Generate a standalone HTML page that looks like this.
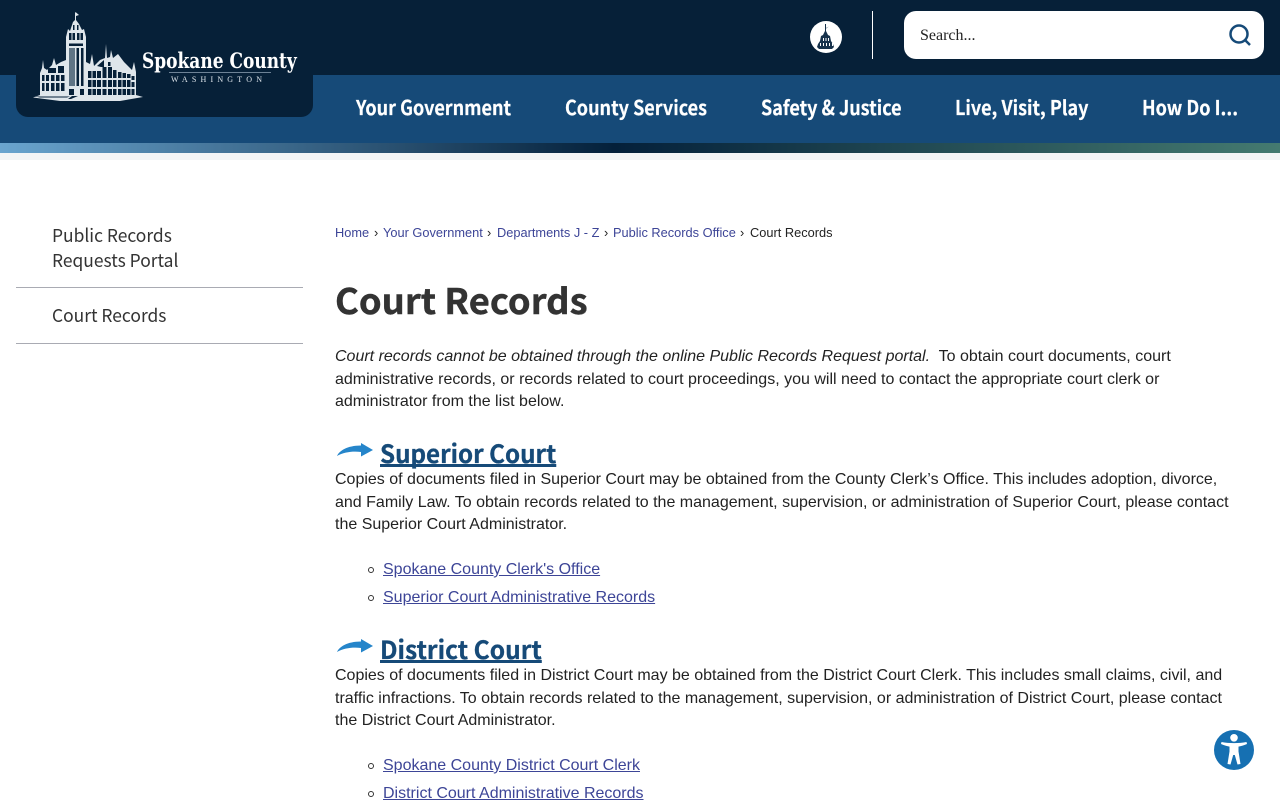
<!DOCTYPE html>
<html lang="en"><head><meta charset="utf-8"><title>Court Records</title>
<style>
*{box-sizing:border-box}
html,body{margin:0;padding:0;width:1280px;height:800px;overflow:hidden;background:#fff}
body{position:relative;font-family:"Liberation Sans",Arial,sans-serif;color:#222}
.a{position:absolute;white-space:nowrap}
a{color:#3d4597}
.nav{top:94px;font:700 20px/25px "Noto Sans CJK JP","Liberation Sans",sans-serif;color:#fff;transform-origin:0 50%;transform:scaleX(.9);-webkit-text-stroke:.2px #fff}
.side{left:52px;font:400 18px/25px "Noto Sans CJK JP","Liberation Sans",sans-serif;color:#333;transform-origin:0 50%;transform:scaleX(.967)}
.t{left:335px;font-size:16px;line-height:22px;color:#222}
.bc{top:225px;font-size:12.8px;line-height:15px}
.bc a{text-decoration:none}
.h2{left:380px;font:700 25px/32px "Noto Sans CJK JP","Liberation Sans",sans-serif;color:#164a78;text-decoration:underline;text-decoration-thickness:2.5px;text-underline-offset:1px;text-decoration-skip-ink:none;transform-origin:0 50%;-webkit-text-stroke:.3px #164a78}
.li{left:383px;font-size:16px;line-height:20px}
.dot{position:absolute;left:368px;width:6px;height:6px;border:1px solid #333;border-radius:50%}
</style></head><body>
<div class="a" style="left:0;top:0;width:1280px;height:75px;background:#062038"></div>
<div class="a" style="left:0;top:75px;width:1280px;height:68px;background:#164a78"></div>
<div class="a" style="left:0;top:143px;width:1280px;height:10px;background:linear-gradient(90deg,#6aa5cf 0%,#04203a 48%,#447a70 100%)"></div>
<div class="a" style="left:0;top:153px;width:1280px;height:7px;background:#f3f5f6"></div>
<div class="a" style="left:16px;top:60px;width:297px;height:57px;background:#062038;border-radius:0 0 12px 12px"></div>

<svg class="a" style="left:30px;top:8px" width="120" height="96" viewBox="30 8 120 96">
<path fill="#dfe6eb" d="M33 97.500 L40 95 V73 L42 68 L43 60 L44 68 L47 70 L52 65 L54 58 L56 65 L61 62 L66 60 V37 L68 29 L70 31 L73 22 L75 20 V13 L75.500 12 L79 15 L76 16 V20 L79 24 L82 30 L84 29 L86 37 V62 L90 64 L92 54 L94 66 L100 60 L105 58 L106 44 L107 58 L110 57 L111 50 L113 58 L118 54 L124 62 L132 70 L134 62 L136 72 V95 L143 97 L120 101 H60 Z"/>
<g fill="#062038">
<path d="M69 43.500h14v2.500H69zM69 33h2.500v7H69zM72.500 33h2.500v7h-2.500zM77 33h2.500v7H77zM80.500 33h2.500v7h-2.500zM73 25h1.500v5H73zM77 25h1.500v5H77z"/>
<path d="M69 48h6v38h-6z" fill="#5f7485"/><path d="M76.500 48h2.500v38h-2.500zM81 48h2.500v38H81z"/>
<path d="M42 75h2.500v6H42zM46 75h3v6h-3zM51 75h3.500v6H51zM56 75h3.500v6H56zM61 75h3.500v6H61zM42 83h2.500v8H42zM46 83h3v8h-3zM51 83h3.500v8H51zM56 83h3.500v8H56zM61 83h3.500v8H61zM48 68h8v5h-8zM58 66h6v7h-6z"/>
<path d="M88 71h3.500v7H88zM92.500 71h3.500v7h-3.500zM97 71h4v7h-4zM102.500 67h4v11h-4zM108 67h4v11h-4zM113 70h3.500v8H113zM118 72h3.500v6H118zM122.500 73h3.500v5h-3.500zM127 74h3.500v4H127zM131.500 76h3v4h-3z"/>
<path d="M88 80h3.500v7H88zM92.500 80h3.500v7h-3.500zM97 80h4v7h-4zM102.500 80h4v7h-4zM108 80h4v7h-4zM113 80h3.500v7H113zM118 80h3.500v7H118zM122.500 80h3.500v7h-3.500zM127 80h3.500v7H127zM131.500 82h3v5h-3z"/>
<path d="M88 89h3.500v6H88zM92.500 89h3.500v6h-3.500zM97 89h4v6h-4zM102.500 89h4v6h-4zM108 89h4v6h-4zM113 89h3.500v6H113zM118 89h3.500v6H118zM122.500 89h3.500v6h-3.500zM127 89h3.500v6H127zM131.500 89h3v6h-3z"/>
<path d="M97 66l7-6v7h-3zM108 62h2.500v4H108zM69 89h5v6h-5zM80 89h4v6h-4z"/>
<path d="M35 96.500h35l-3 1H40zM78 96h-6l-4 3h3z"/>
</g></svg>
<div class="a" style="left:142px;top:49px;font:700 21px/24px 'DejaVu Serif','Liberation Serif',serif;color:#fff;transform-origin:0 50%;transform:scaleX(.81)">Spokane County</div>
<div class="a" style="left:169px;top:72px;width:102px;height:1px;background:#6d8296"></div>
<div class="a" style="left:171px;top:75px;font:400 8px/10px 'Liberation Serif',serif;letter-spacing:4.2px;color:#dfe6ec">WASHINGTON</div>

<div class="a nav" style="left:356px">Your Government</div>
<div class="a nav" style="left:565px">County Services</div>
<div class="a nav" style="left:761px">Safety &amp; Justice</div>
<div class="a nav" style="left:955px">Live, Visit, Play</div>
<div class="a nav" style="left:1142px">How Do I...</div>

<svg class="a" style="left:810px;top:21px" width="32" height="32" viewBox="0 0 32 32"><circle cx="16" cy="16" r="16" fill="#fff"/><path fill="#17324c" d="M15 3h1v4l3-1.500-3 2V10l2 4 2 1 1 5 2 3 1 3-2 2H9l-2-2 1-3 2-3 1-5 2-1 2-4z"/><path fill="#fff" d="M13 17h1v3h-1zM15.500 17h1v3h-1zM18 17h1v3h-1zM10 22h1v3h-1zM13 22h1v3h-1zM16 22h1v3h-1zM19 22h1v3h-1zM22 22h1v3h-1z"/></svg>
<div class="a" style="left:872px;top:11px;width:1px;height:48px;background:#fff"></div>
<div class="a" style="left:904px;top:11px;width:360px;height:48px;background:#fff;border-radius:12px"></div>
<div class="a" style="left:920px;top:26px;font:16px/20px 'Liberation Serif',serif;color:#222">Search...</div>
<svg class="a" style="left:1228px;top:23px" width="24" height="24" viewBox="0 0 24 24" fill="none" stroke="#164a78" stroke-width="2.500"><circle cx="11" cy="11" r="8.500"/><path d="M17 17l5 5"/></svg>

<div class="a side" style="top:223px">Public Records</div>
<div class="a side" style="top:248px">Requests Portal</div>
<div class="a" style="left:16px;top:287px;width:287px;height:1px;background:#a9abb3"></div>
<div class="a side" style="top:303px">Court Records</div>
<div class="a" style="left:16px;top:343px;width:287px;height:1px;background:#a9abb3"></div>

<div class="a bc" style="left:335px"><a href="#">Home</a></div><div class="a bc" style="left:374px">›</div>
<div class="a bc" style="left:383px"><a href="#">Your Government</a></div><div class="a bc" style="left:487px">›</div>
<div class="a bc" style="left:497px"><a href="#">Departments J - Z</a></div><div class="a bc" style="left:604px">›</div>
<div class="a bc" style="left:613px"><a href="#">Public Records Office</a></div><div class="a bc" style="left:740px">›</div>
<div class="a bc" style="left:750px;color:#222">Court Records</div>

<div class="a" style="left:335px;top:277px;font:700 35px/46px 'Noto Sans CJK JP','Liberation Sans',sans-serif;color:#333;transform-origin:0 50%;transform:scaleX(1.04);-webkit-text-stroke:.4px #333">Court Records</div>

<div class="a t" style="top:346px"><i>Court records cannot be obtained through the online Public Records Request portal.</i>&nbsp; To obtain court documents, court</div>
<div class="a t" style="top:369px">administrative records, or records related to court proceedings, you will need to contact the appropriate court clerk or</div>
<div class="a t" style="top:391px">administrator from the list below.</div>

<svg class="a" style="left:336px;top:441px" width="38" height="18" viewBox="0 0 38 18"><path fill="#2585ca" d="M1 15C3 10 11 4.500 25 4.500V2L37 9 25 15.500V11C17 10 8 11 1 15Z"/></svg>
<div class="a h2" style="top:437px;transform:scaleX(.967)">Superior Court</div>
<div class="a t" style="top:469px">Copies of documents filed in Superior Court may be obtained from the County Clerk’s Office. This includes adoption, divorce,</div>
<div class="a t" style="top:492px">and Family Law. To obtain records related to the management, supervision, or administration of Superior Court, please contact</div>
<div class="a t" style="top:514px">the Superior Court Administrator.</div>
<div class="dot" style="top:567px"></div><div class="a li" style="top:560px"><a href="#">Spokane County Clerk's Office</a></div>
<div class="dot" style="top:595px"></div><div class="a li" style="top:588px"><a href="#">Superior Court Administrative Records</a></div>

<svg class="a" style="left:336px;top:637px" width="38" height="18" viewBox="0 0 38 18"><path fill="#2585ca" d="M1 15C3 10 11 4.500 25 4.500V2L37 9 25 15.500V11C17 10 8 11 1 15Z"/></svg>
<div class="a h2" style="top:633px;transform:scaleX(.982)">District Court</div>
<div class="a t" style="top:665px">Copies of documents filed in District Court may be obtained from the District Court Clerk. This includes small claims, civil, and</div>
<div class="a t" style="top:688px">traffic infractions. To obtain records related to the management, supervision, or administration of District Court, please contact</div>
<div class="a t" style="top:710px">the District Court Administrator.</div>
<div class="dot" style="top:763px"></div><div class="a li" style="top:756px"><a href="#">Spokane County District Court Clerk</a></div>
<div class="dot" style="top:791px"></div><div class="a li" style="top:784px"><a href="#">District Court Administrative Records</a></div>

<svg class="a" style="left:1214px;top:730px" width="40" height="40" viewBox="0 0 40 40"><circle cx="20" cy="20" r="20" fill="#1670b2"/><circle cx="20" cy="7.800" r="3.800" fill="#fff"/><path fill="#fff" d="M7 14 7.500 12C15 13.500 25 13.500 32.500 12L33 14C29.500 15.500 26.500 16.200 24.500 16.600V21.500L26.500 34 23.500 34.500 20.800 25H19.200L16.500 34.500 13.500 34 15.500 21.500V16.600C13.500 16.200 10.500 15.500 7 14Z"/></svg>
</body></html>
